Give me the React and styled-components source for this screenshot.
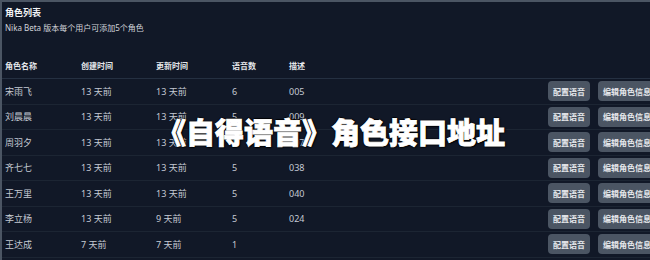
import styled, { createGlobalStyle } from 'styled-components';

const GlobalStyle = createGlobalStyle`
	html, body {
		margin: 0;
		padding: 0;
		background: #111827;
	}
	body {
		font-family: "Noto Sans", "Noto Sans CJK SC", sans-serif;
	}
`;

const Page = styled.div`
	position: relative;
	width: 650px;
	height: 260px;
	overflow: hidden;
	background: #111827;
	border-top: 2px solid #4b5563;
	border-left: 2px solid #4b5563;
	box-sizing: border-box;
`;

const Head = styled.div`
	padding: 3px 0 0 3px;
	height: 50px;
	box-sizing: border-box;

	h2 {
		margin: 0;
		font-size: 9px;
		line-height: 15px;
		font-weight: 700;
		color: #f3f4f6;
	}

	p {
		margin: 2px 0 0;
		font-size: 8px;
		line-height: 12px;
		color: #d1d5db;
	}
`;

const Table = styled.div`
	width: 700px;
	display: flex;
	flex-direction: column;
`;

const Row = styled.div`
	display: grid;
	grid-template-columns: 76px 75px 76px 57px 259px 50px 80px;
	align-items: center;
	height: ${(p) => (p.$header ? '27px' : '25.5px')};
	padding-left: 3px;
	border-bottom: 1px solid ${(p) => (p.$header ? '#253041' : '#1c2533')};
	box-sizing: border-box;
	font-size: ${(p) => (p.$header ? '8px' : '9px')};
	font-weight: ${(p) => (p.$header ? 700 : 400)};
	color: ${(p) => (p.$header ? '#e5e7eb' : '#c5cad3')};
	white-space: nowrap;
`;

const Btn = styled.button`
	height: 20px;
	padding: 0 5px;
	justify-self: start;
	border: none;
	border-radius: 4px;
	background: #4b5563;
	color: #e5e7eb;
	font-family: inherit;
	font-size: 8px;
	font-weight: 700;
	white-space: nowrap;
`;

const Banner = styled.div`
	position: absolute;
	left: 0;
	right: 0;
	top: 109px;
	text-align: center;
	padding-left: 10px;
	font-family: "Noto Sans CJK SC", sans-serif;
	font-size: 29px;
	font-weight: 900;
	line-height: 40px;
	color: #ffffff;
	-webkit-text-stroke: 0.8px #ffffff;
	text-shadow: 1px 0 1px #000, -1px 0 1px #000, 0 1px 1px #000, 0 -1px 1px #000, 1px 1px 2px #000;
`;

const roles = [
	['宋雨飞', '13 天前', '13 天前', '6', '005'],
	['刘晨晨', '13 天前', '13 天前', '5', '009'],
	['周羽夕', '13 天前', '13 天前', '6', '007'],
	['齐七七', '13 天前', '13 天前', '5', '038'],
	['王万里', '13 天前', '13 天前', '5', '040'],
	['李立杨', '13 天前', '9 天前', '5', '024'],
	['王达成', '7 天前', '7 天前', '1', ''],
	['林小雨', '7 天前', '7 天前', '1', ''],
];

export default function App() {
	return (
		<Page>
			<GlobalStyle />
			<Head>
				<h2>角色列表</h2>
				<p>Nika Beta 版本每个用户可添加5个角色</p>
			</Head>
			<Table>
				<Row $header>
					<span>角色名称</span>
					<span>创建时间</span>
					<span>更新时间</span>
					<span>语音数</span>
					<span>描述</span>
					<span />
					<span />
				</Row>
				{roles.map((r) => (
					<Row key={r[0]}>
						<span>{r[0]}</span>
						<span>{r[1]}</span>
						<span>{r[2]}</span>
						<span>{r[3]}</span>
						<span>{r[4]}</span>
						<Btn>配置语音</Btn>
						<Btn>编辑角色信息</Btn>
					</Row>
				))}
			</Table>
			<Banner>《自得语音》角色接口地址</Banner>
		</Page>
	);
}
